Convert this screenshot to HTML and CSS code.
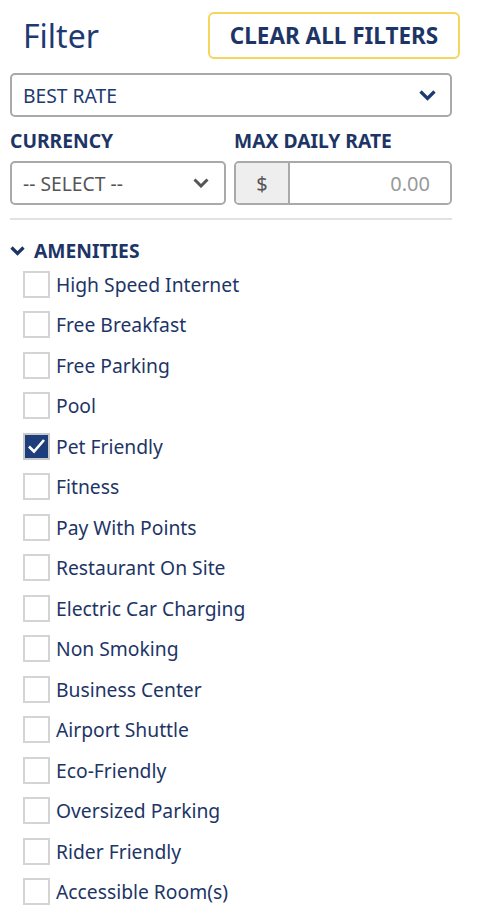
FILE: index.html
```html
<!DOCTYPE html>
<html lang="en">
<head>
    <meta charset="UTF-8">
    <meta name="viewport" content="width=device-width, initial-scale=1.0">
    <title>Filter</title>
    <link rel="stylesheet" href="styles.css">
</head>
<body>
    <div class="filter-panel">
        <div class="filter-header">
            <h2 class="filter-title">Filter</h2>
            <button class="clear-button">CLEAR ALL FILTERS</button>
        </div>

        <div class="select-box sort-select">
            <span>BEST RATE</span>
            <svg class="chevron" width="17" height="11" viewBox="0 0 17 11"><path d="M1.5 1.5 L8.5 8.5 L15.5 1.5" fill="none" stroke="currentColor" stroke-width="3.2" stroke-linejoin="miter"/></svg>
        </div>

        <div class="rate-row">
            <div class="rate-col">
                <label class="field-label">CURRENCY</label>
                <div class="select-box currency-select">
                    <span>-- SELECT --</span>
                    <svg class="chevron" width="16" height="10" viewBox="0 0 16 10"><path d="M1.5 1.5 L8 8 L14.5 1.5" fill="none" stroke="currentColor" stroke-width="3" stroke-linejoin="miter"/></svg>
                </div>
            </div>
            <div class="rate-col">
                <label class="field-label">MAX DAILY RATE</label>
                <div class="input-group">
                    <span class="addon">$</span>
                    <input class="rate-input" type="text" placeholder="0.00">
                </div>
            </div>
        </div>

        <hr class="divider">

        <div class="section-head">
            <svg class="section-chevron" width="15" height="10" viewBox="0 0 15 10"><path d="M1.5 1.5 L7.5 7.5 L13.5 1.5" fill="none" stroke="currentColor" stroke-width="3.2"/></svg>
            <span>AMENITIES</span>
        </div>

        <ul class="amenity-list" id="amenityList"></ul>
    </div>

    <script>
        const amenities = [
            "High Speed Internet", "Free Breakfast", "Free Parking", "Pool",
            "Pet Friendly", "Fitness", "Pay With Points", "Restaurant On Site",
            "Electric Car Charging", "Non Smoking", "Business Center",
            "Airport Shuttle", "Eco-Friendly", "Oversized Parking",
            "Rider Friendly", "Accessible Room(s)"
        ];
        const checked = ["Pet Friendly"];

        const list = document.getElementById('amenityList');
        amenities.forEach(name => {
            let li = document.createElement('li');
            li.className = 'amenity';
            let box = document.createElement('span');
            box.className = 'check-box';
            if (checked.includes(name)) {
                box.classList.add('checked');
                box.innerHTML = '<svg width="19" height="16" viewBox="0 0 19 16"><path d="M2 8.5 L7 13.5 L17 2" fill="none" stroke="#fff" stroke-width="2.6"/></svg>';
            }
            let text = document.createElement('span');
            text.textContent = name;
            li.appendChild(box);
            li.appendChild(text);
            li.addEventListener('click', () => {
                box.classList.toggle('checked');
            });
            list.appendChild(li);
        });
    </script>
</body>
</html>
```

FILE: styles.css
```css
body {
    margin: 0;
    background-color: #ffffff;
    font-family: "Noto Sans", "Open Sans", sans-serif;
    color: #1d3566;
}

.filter-panel {
    width: 442px;
    padding: 12px 0 0 10px;
}

.filter-header {
    display: flex;
    justify-content: space-between;
    align-items: center;
    margin-right: -8px;
}

.filter-title {
    margin: 0 0 0 13px;
    font-size: 32px;
    font-weight: normal;
    line-height: 40px;
    color: #1e3a72;
}

.clear-button {
    width: 252px;
    height: 47px;
    padding: 0;
    background-color: #ffffff;
    border: 2px solid #f6d55c;
    border-radius: 6px;
    font-family: inherit;
    font-weight: bold;
    font-size: 22.5px;
    color: #1d3566;
    cursor: pointer;
}

.select-box {
    display: flex;
    justify-content: space-between;
    align-items: center;
    height: 44px;
    box-sizing: border-box;
    border: 2px solid #a9a9a9;
    border-radius: 5px;
    padding: 0 14px 0 11px;
    font-size: 19.3px;
    background: #ffffff;
}

.sort-select {
    margin-top: 14px;
    color: #1e3a72;
}

.currency-select {
    color: #555555;
    padding-right: 15px;
}

.currency-select .chevron {
    color: #555555;
}

.rate-row {
    display: grid;
    grid-template-columns: 216px 218px;
    gap: 8px;
    margin-top: 12px;
}

.field-label {
    display: block;
    font-weight: bold;
    font-size: 19.3px;
    line-height: 24px;
    margin-bottom: 8px;
    color: #1d3566;
}

.input-group {
    display: flex;
    height: 44px;
    box-sizing: border-box;
    border: 2px solid #a9a9a9;
    border-radius: 5px;
    overflow: hidden;
}

.addon {
    width: 52px;
    background-color: #eeeeee;
    border-right: 2px solid #a9a9a9;
    display: flex;
    align-items: center;
    justify-content: center;
    font-size: 20px;
    color: #555555;
}

.rate-input {
    flex: 1;
    min-width: 0;
    border: none;
    outline: none;
    text-align: right;
    padding: 0 20px 0 0;
    font-family: inherit;
    font-size: 20px;
    color: #555555;
}

.rate-input::placeholder {
    color: #999999;
}

.divider {
    border: none;
    border-top: 2px solid #e2e2e2;
    margin: 13px 0 0 0;
}

.section-head {
    display: flex;
    align-items: center;
    gap: 9px;
    margin-top: 19px;
    font-weight: bold;
    font-size: 19.3px;
    line-height: 24px;
    color: #1d3566;
}

.amenity-list {
    list-style: none;
    margin: 0;
    padding: 0 0 0 13px;
    margin-top: 1px;
}

.amenity {
    display: flex;
    align-items: center;
    gap: 6px;
    height: 40.5px;
    font-size: 19.3px;
    color: #1d3566;
    cursor: pointer;
}

.check-box {
    width: 27px;
    height: 27px;
    box-sizing: border-box;
    border: 2px solid #d4d4d4;
    background: #ffffff;
    display: flex;
    align-items: center;
    justify-content: center;
}

.check-box.checked {
    background-color: #1e3d7b;
    border-color: #c9c9c9;
}
```
